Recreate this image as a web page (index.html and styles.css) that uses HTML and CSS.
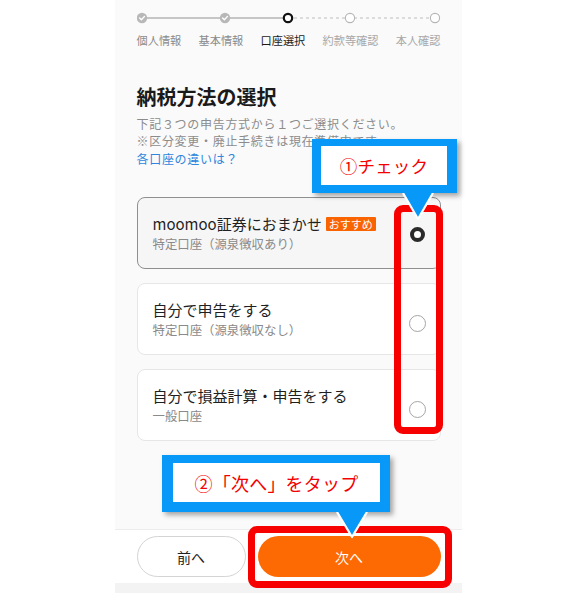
FILE: index.html
```html
<!DOCTYPE html>
<html lang="ja">
<head>
<meta charset="utf-8">
<link rel="stylesheet" href="styles.css">
</head>
<body>
<div class="stage">
  <div class="screen">
    <div class="stepper">
      <svg class="track" width="304" height="12" viewBox="0 0 304 12">
        <line x1="5" y1="6" x2="151" y2="6" stroke="#b5b5b5" stroke-width="1.3"/>
        <line x1="151" y1="6" x2="298" y2="6" stroke="#bdbdbd" stroke-width="1.2" stroke-dasharray="3 3"/>
        <circle cx="5" cy="6" r="5.2" fill="#b8b8b8"/>
        <path d="M2.6 6.1 L4.4 7.8 L7.5 4.4" fill="none" stroke="#fff" stroke-width="1.4" stroke-linecap="round" stroke-linejoin="round"/>
        <circle cx="88" cy="6" r="5.2" fill="#b8b8b8"/>
        <path d="M85.6 6.1 L87.4 7.8 L90.5 4.4" fill="none" stroke="#fff" stroke-width="1.4" stroke-linecap="round" stroke-linejoin="round"/>
        <circle cx="151" cy="6" r="4.2" fill="#fff" stroke="#111" stroke-width="2.2"/>
        <circle cx="213" cy="6" r="4.6" fill="#fff" stroke="#b5b5b5" stroke-width="1.1"/>
        <circle cx="298" cy="6" r="4.6" fill="#fff" stroke="#b5b5b5" stroke-width="1.1"/>
      </svg>
      <div class="step-labels">
        <span class="done">個人情報</span>
        <span class="done">基本情報</span>
        <span class="current">口座選択</span>
        <span class="todo">約款等確認</span>
        <span class="todo">本人確認</span>
      </div>
    </div>

    <h1 class="title">納税方法の選択</h1>
    <p class="desc">下記３つの申告方式から１つご選択ください。<br>※区分変更・廃止手続きは現在準備中です。</p>
    <a class="link">各口座の違いは？</a>

    <div class="options">
      <div class="option selected">
        <div class="opt-text">
          <div class="opt-title">moomoo証券におまかせ<span class="badge">おすすめ</span></div>
          <div class="opt-sub">特定口座（源泉徴収あり）</div>
        </div>
        <span class="radio on"></span>
      </div>
      <div class="option">
        <div class="opt-text">
          <div class="opt-title">自分で申告をする</div>
          <div class="opt-sub">特定口座（源泉徴収なし）</div>
        </div>
        <span class="radio"></span>
      </div>
      <div class="option">
        <div class="opt-text">
          <div class="opt-title">自分で損益計算・申告をする</div>
          <div class="opt-sub">一般口座</div>
        </div>
        <span class="radio"></span>
      </div>
    </div>

    <div class="footer">
      <button class="btn prev">前へ</button>
      <button class="btn next">次へ</button>
    </div>
    <div class="bottom-strip"></div>
  </div>

  <div class="mark mark-radios"></div>
  <div class="mark mark-next"></div>

  <div class="callout callout-1">
    <div class="callout-inner">①チェック</div>
    <svg class="ptr" width="34" height="28" viewBox="0 0 34 28">
      <polygon points="2,0 32,0 17,26" fill="#0898f8"/>
      <polyline points="2,0 17,26 32,0" fill="none" stroke="#fff" stroke-width="2.2" stroke-linejoin="round"/>
    </svg>
  </div>
  <div class="callout callout-2">
    <div class="callout-inner">②「次へ」をタップ</div>
    <svg class="ptr" width="34" height="28" viewBox="0 0 34 28">
      <polygon points="2,0 32,0 17,25" fill="#0898f8"/>
      <polyline points="2,0 17,25 32,0" fill="none" stroke="#fff" stroke-width="2.2" stroke-linejoin="round"/>
    </svg>
  </div>
</div>
</body>
</html>
```

FILE: styles.css
```css
* { box-sizing: border-box; }
html, body { margin: 0; padding: 0; background: #fff; }
body {
  font-family: "Noto Sans CJK JP", "Noto Sans", sans-serif;
  width: 576px;
  height: 593px;
  overflow: hidden;
}
.stage {
  position: relative;
  width: 576px;
  height: 593px;
  display: flex;
  justify-content: center;
}
.screen {
  width: 347px;
  height: 593px;
  background: #fafafa;
  display: flex;
  flex-direction: column;
  padding: 0 21px 0 22px;
}
.stepper { padding-top: 12px; }
.track { display: block; }
.step-labels {
  display: flex;
  justify-content: space-between;
  margin-top: 8px;
  font-size: 11.2px;
  line-height: 16px;
}
.step-labels .done { color: #8a8a8a; }
.step-labels .current { color: #1a1a1a; }
.step-labels .todo { color: #a8a8a8; }

.title {
  margin: 35px 0 0;
  font-size: 20px;
  line-height: 28px;
  font-weight: 700;
  color: #1a1a1a;
}
.desc {
  margin: 4px 0 0;
  font-size: 12px;
  letter-spacing: 0.7px;
  line-height: 17.4px;
  color: #8c8c8c;
  white-space: nowrap;
}
.link {
  font-size: 12px;
  letter-spacing: 0.7px;
  line-height: 17.4px;
  color: #2e86de;
}
.options {
  margin-top: 30px;
  display: flex;
  flex-direction: column;
  gap: 14px;
}
.option {
  height: 72px;
  border: 1px solid #e6e6e6;
  border-radius: 8px;
  background: #fff;
  display: flex;
  align-items: center;
  justify-content: space-between;
  padding: 0 14px 0 15px;
}
.option.selected {
  background: #f6f6f7;
  border-color: #8f8f8f;
}
.opt-title {
  font-size: 15px;
  line-height: 21px;
  color: #1f1f1f;
  display: flex;
  align-items: center;
}
.opt-sub {
  margin-top: 1px;
  font-size: 12.4px;
  line-height: 18px;
  color: #8a8a8a;
}
.badge {
  margin-left: 4px;
  background: #fa6400;
  color: #fff;
  font-size: 11px;
  line-height: 14px;
  padding: 0 3px;
  border-radius: 1px;
}
.radio {
  width: 17px;
  height: 17px;
  border-radius: 50%;
  border: 1px solid #a5a5a5;
  background: #fff;
  margin-top: 8px;
}
.radio.on {
  width: 15px;
  height: 15px;
  border: 4.5px solid #2a2a2a;
  margin-top: 2px;
  margin-right: 1px;
}

.footer {
  margin: auto -21px 0 -22px;
  border-top: 1px solid #ececec;
  background: #fff;
  display: flex;
  gap: 12px;
  padding: 6px 21px 6px 22px;
}
.btn {
  height: 41px;
  border-radius: 21px;
  font-family: inherit;
  font-size: 14px;
}
.btn.prev {
  width: 109px;
  background: #fff;
  border: 1px solid #d4d4d4;
  color: #222;
}
.btn.next {
  flex: 1;
  background: #fd6a03;
  border: 0;
  color: #fff;
}
.bottom-strip {
  height: 10px;
  margin: 0 -21px 0 -22px;
  background: #f3f3f3;
}

.mark {
  position: absolute;
  border: 7px solid #f60000;
  border-radius: 9px;
}
.mark-radios { left: 394px; top: 205px; width: 49px; height: 229px; }
.mark-next { left: 248px; top: 526px; width: 204px; height: 62px; }

.callout {
  position: absolute;
  background: #0898f8;
  box-shadow: 3px 3px 5px rgba(0, 0, 0, 0.35);
}
.callout-inner {
  background: #fff;
  height: 100%;
  display: flex;
  align-items: center;
  justify-content: center;
  color: #f40000;
  font-size: 17.5px;
  letter-spacing: 0.2px;
}
.callout-1 { left: 312px; top: 139px; width: 145px; height: 54px; padding: 7px 10px 8px 9px; }
.callout-2 { left: 162px; top: 455px; width: 228px; height: 57px; padding: 8px 10px 10px 11px; }
.callout-2 .callout-inner { font-size: 18px; }
.ptr {
  position: absolute;
  top: 100%;
  display: block;
}
.callout-1 .ptr { left: 89px; }
.callout-2 .ptr { left: 173px; }
```
